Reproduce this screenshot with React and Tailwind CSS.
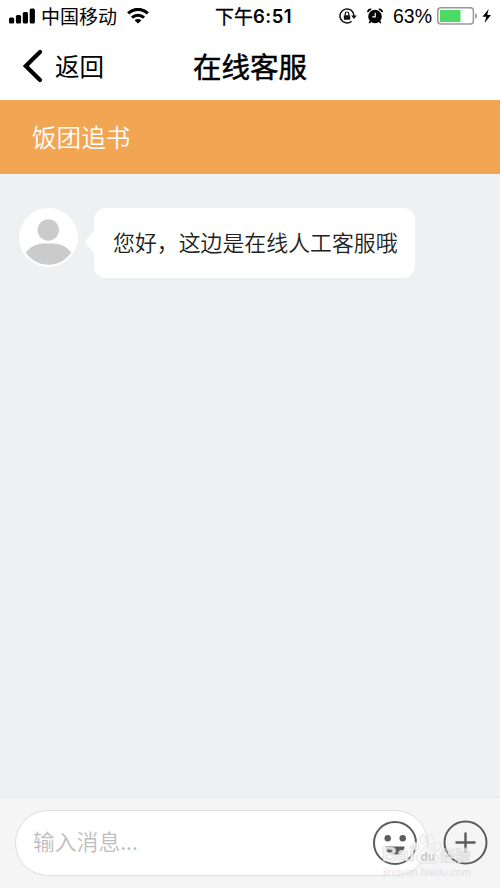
import React from "react";

function SignalIcon() {
  return (
    <svg width="26" height="16" viewBox="0 0 26 16" className="block shrink-0">
      <rect x="0" y="9.5" width="5.2" height="6" rx="1.5" />
      <rect x="6.9" y="7" width="5.2" height="8.5" rx="1.5" />
      <rect x="13.8" y="4" width="5.2" height="11.5" rx="1.5" />
      <rect x="20.7" y="0.5" width="5.2" height="15" rx="1.5" />
    </svg>
  );
}

function WifiIcon() {
  return (
    <svg width="22" height="16" viewBox="0 0 22 16" className="block shrink-0" fill="none" stroke="#000">
      <path d="M1.2 5.4a14 14 0 0 1 19.6 0" strokeWidth="3.2" />
      <path d="M5 9.6a8.6 8.6 0 0 1 12 0" strokeWidth="3" />
      <path d="M11 15.6 7.6 12.5a4.8 4.8 0 0 1 6.8 0z" fill="#000" stroke="none" />
    </svg>
  );
}

function RotationLockIcon() {
  return (
    <svg width="18" height="16" viewBox="0 0 18 16" className="block shrink-0" fill="none" stroke="#111" strokeWidth="1.5">
      <path d="M12.6 13.2A7 7 0 1 1 15 8" />
      <path d="M12.2 7.4h5.6L15 11z" fill="#111" stroke="none" />
      <rect x="4.8" y="7.2" width="6.4" height="4.6" rx="0.6" fill="#111" stroke="none" />
      <path d="M6.2 7.4V5.8a1.8 1.8 0 0 1 3.6 0v1.6" strokeWidth="1.2" />
    </svg>
  );
}

function AlarmIcon() {
  return (
    <svg width="16" height="16" viewBox="0 0 16 16" className="block shrink-0">
      <circle cx="8" cy="8.5" r="6.8" />
      <path d="M3.6 13 2.6 14.6M12.4 13l1 1.6" stroke="#000" strokeWidth="1.6" strokeLinecap="round" />
      <path d="M1 4.2A2.6 2.6 0 0 1 4.2 1.4M15 4.2A2.6 2.6 0 0 0 11.8 1.4" fill="none" stroke="#000" strokeWidth="1.8" />
      <path d="M8.2 4.8v4H5.2" fill="none" stroke="#fff" strokeWidth="1.2" />
    </svg>
  );
}

function BatteryIcon() {
  return (
    <svg width="41" height="18" viewBox="0 0 41 18" className="block shrink-0">
      <rect x="0.8" y="0.8" width="35.6" height="16.2" rx="3" fill="#fff" stroke="#999" strokeWidth="1.5" />
      <rect x="3" y="3" width="20.5" height="12" fill="#4cd964" />
      <path d="M38.2 6a3.3 3.3 0 0 1 0 6z" fill="#999" />
    </svg>
  );
}

function StatusBar() {
  return (
    <div className="grid h-8 grid-cols-[190px_1fr_190px] items-center">
      <div className="flex items-center pl-[9px]">
        <SignalIcon />
        <span className="ml-[6px] text-[19px] leading-8">中国移动</span>
        <span className="ml-[10px]"><WifiIcon /></span>
      </div>
      <div className="flex items-center justify-center pl-[7px] leading-8 whitespace-nowrap">
        <span className="text-[19px] font-normal [-webkit-text-stroke:0.3px_#000]">下午</span>
        <span className="font-['Inter'] text-[18.5px] font-semibold tracking-[0.5px]">6:51</span>
      </div>
      <div className="flex items-center pl-[29px]">
        <RotationLockIcon />
        <span className="ml-[10px]"><AlarmIcon /></span>
        <span className="ml-[10px] w-[44px] font-['Liberation_Sans'] text-[19.5px] leading-8">63%</span>
        <BatteryIcon />
        <svg width="10" height="16" viewBox="0 0 10 16" className="ml-[4px] block shrink-0">
          <path d="M6.7 1 .5 8.8h3.8L2.6 15 9 7H5.2z" />
        </svg>
      </div>
    </div>
  );
}

function Watermark() {
  return (
    <svg width="96" height="46" viewBox="0 0 96 46" className="pointer-events-none absolute top-[36px] left-[381px]" fill="#f6f6f6" stroke="#d6d6d6" strokeWidth="0.7" opacity="0.85">
      <ellipse cx="35" cy="12.5" rx="3" ry="4.3" transform="rotate(-15 35 12.5)" />
      <ellipse cx="42" cy="5.5" rx="3.3" ry="4.6" />
      <ellipse cx="50" cy="5.5" rx="3.3" ry="4.6" />
      <ellipse cx="56.5" cy="12.5" rx="3" ry="4.3" transform="rotate(15 56.5 12.5)" />
      <path d="M46 12c-4 0-5 4-8 7-5 5-3 10 2 10h12c6 0 7-5 2-10-3-3-4-7-8-7z" />
      <text x="1" y="27" fontFamily="Liberation Sans, sans-serif" fontWeight="bold" fontSize="20" textLength="33" lengthAdjust="spacingAndGlyphs">Bai</text>
      <text x="39.5" y="26.5" fontFamily="Liberation Sans, sans-serif" fontWeight="bold" fontSize="12" fill="#c4c4c4" stroke="none">du</text>
      <text x="59.5" y="27" fontFamily="Noto Sans CJK SC, sans-serif" fontWeight="bold" fontSize="15">经验</text>
      <text x="2" y="41.5" fontFamily="Liberation Sans, sans-serif" fontSize="10" textLength="88" lengthAdjust="spacingAndGlyphs" fill="#e0e0e0" stroke="none">jingyan.baidu.com</text>
    </svg>
  );
}

function Composer() {
  return (
    <footer className="relative flex h-[91px] items-start border-t border-[#e8e8e9] bg-[#f5f5f5] pt-[12px] pl-[15px]">
      <div className="flex h-[66px] w-[413px] items-center justify-between rounded-full border border-[#dedee1] bg-white pr-[9px] pl-[17px]">
        <span className="-mt-[5px] text-[21.8px] leading-8 font-[350] text-[#bdbdbd]">输入消息...</span>
        <svg width="46" height="46" viewBox="0 0 46 46" fill="none" stroke="#5c5c5c" strokeWidth="2">
          <circle cx="23" cy="23" r="21" />
          <circle cx="15.7" cy="18.3" r="3.2" fill="#5c5c5c" stroke="none" />
          <circle cx="30.7" cy="18.3" r="3.2" fill="#5c5c5c" stroke="none" />
          <path d="M13.5 26.5h19c0 11-19 11-19 0z" fill="#5c5c5c" stroke="none" />
        </svg>
      </div>
      <svg width="46" height="46" viewBox="0 0 46 46" className="mt-[10px] ml-[15px]" fill="none" stroke="#5c5c5c" strokeWidth="2">
        <circle cx="22.5" cy="22.5" r="21" />
        <path d="M12.5 22.5h20M22.5 12.5v20" strokeWidth="2.4" />
      </svg>
      <Watermark />
    </footer>
  );
}

export default function App() {
  return (
    <div className="flex h-[888px] w-[500px] flex-col overflow-hidden bg-[#eff0f2] font-['Noto_Sans_CJK_SC',sans-serif] text-black">
      <header className="h-[100px] bg-white">
        <StatusBar />
        <div className="grid h-[68px] grid-cols-3 items-center">
          <div className="flex items-center pl-[22px]">
            <svg width="22" height="34" viewBox="0 0 22 34" fill="none" stroke="#000" strokeWidth="4.2" strokeLinecap="round" strokeLinejoin="miter">
              <path d="M18 3 3.8 17 18 31" />
            </svg>
            <span className="-mt-[1px] ml-[11px] text-[24.5px] leading-9">返回</span>
          </div>
          <h1 className="-mt-[1px] text-center text-[28.5px] leading-9 font-normal whitespace-nowrap [-webkit-text-stroke:0.5px_#000]">在线客服</h1>
        </div>
      </header>
      <div className="flex h-[74px] items-center bg-[#f2a654] pb-[1px] pl-[32px] text-[24.6px] font-[350] text-white">饭团追书</div>
      <main className="flex flex-1 items-start pt-[34px] pl-[19px]">
        <svg width="59" height="59" viewBox="0 0 59 59" className="shrink-0">
          <circle cx="29.5" cy="29.5" r="29.5" fill="#fff" />
          <circle cx="29.3" cy="22" r="10.7" fill="#cbcbcb" />
          <path d="M6.7 44.5C11 39 17.5 35.4 24 35.4h11C41.5 35.4 48 39 52.3 44.5a27.4 27.4 0 0 1-45.6 0z" fill="#cbcbcb" />
        </svg>
        <svg width="9" height="22" viewBox="0 0 9 22" className="mt-[23px] ml-[7px] shrink-0">
          <path d="M9 0v22L0 11z" fill="#fff" />
        </svg>
        <div className="flex h-[70px] w-[321px] items-center rounded-xl bg-white pb-[2px] pl-[19px] text-[21.9px] font-[350] whitespace-nowrap text-[#222]">您好，这边是在线人工客服哦</div>
      </main>
      <Composer />
    </div>
  );
}
